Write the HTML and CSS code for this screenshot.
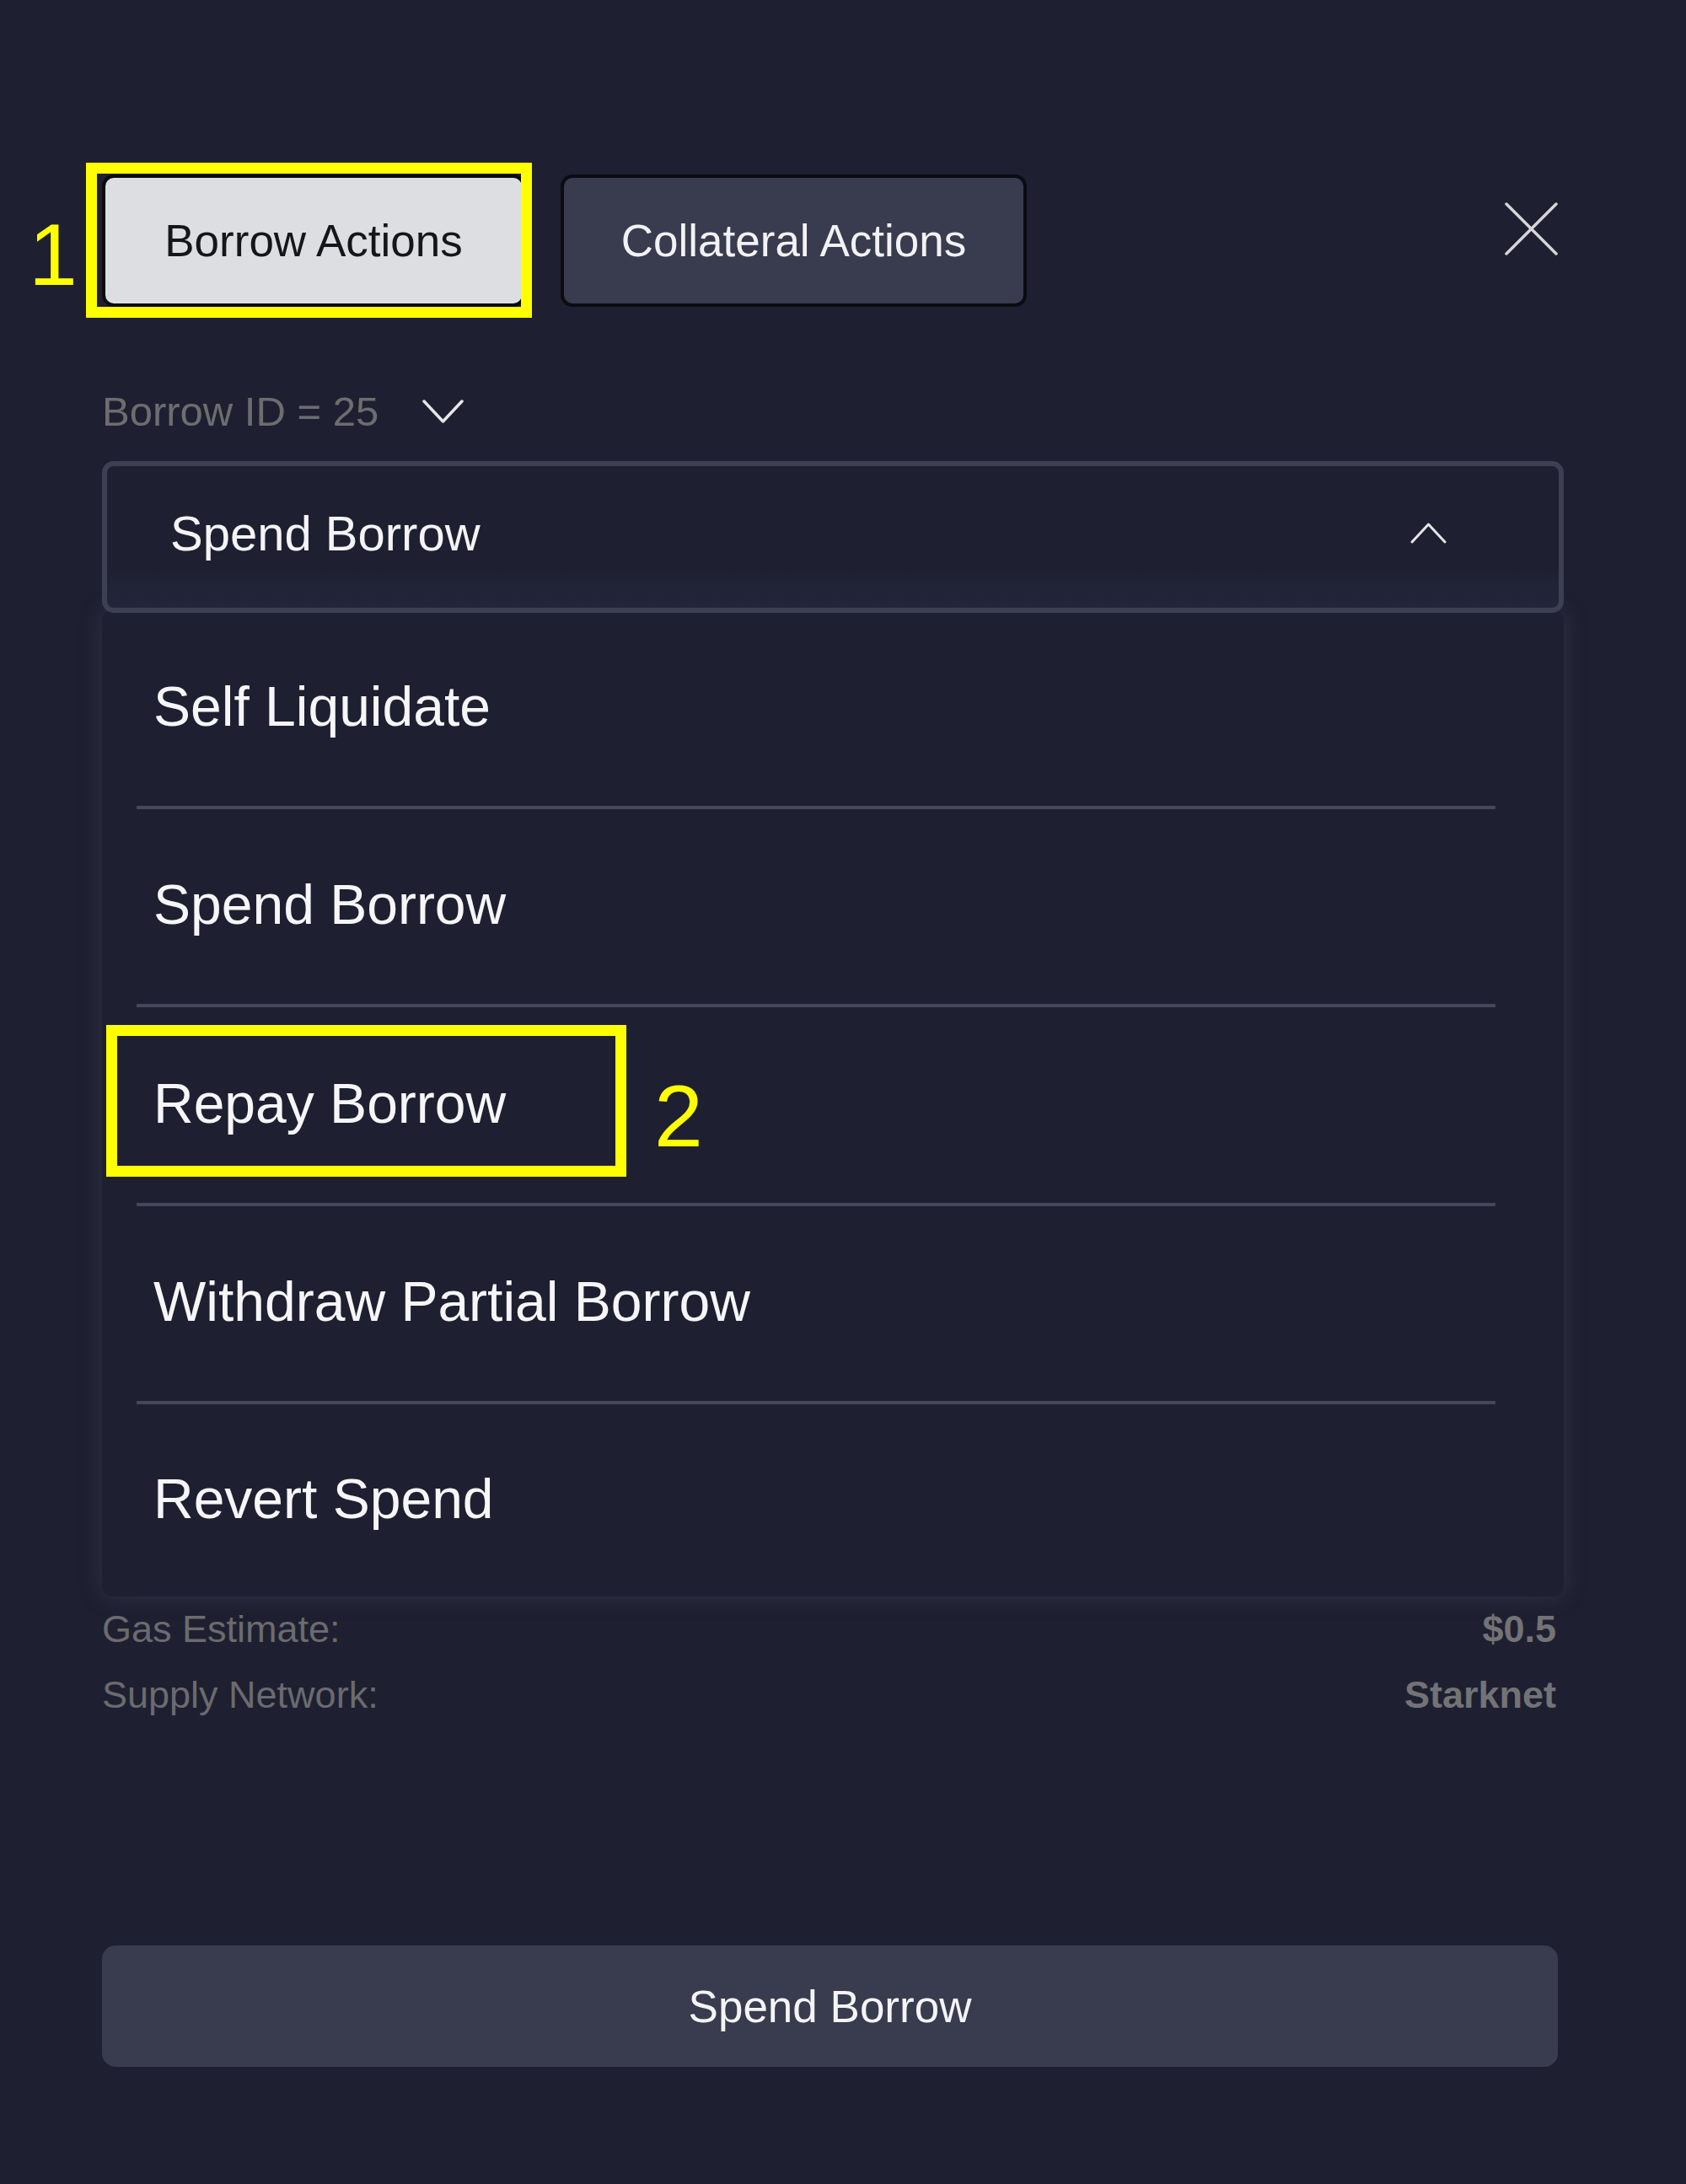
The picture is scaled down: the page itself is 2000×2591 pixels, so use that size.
FILE: index.html
```html
<!DOCTYPE html>
<html lang="en">
<head>
<meta charset="utf-8">
<title>Borrow Actions</title>
<link rel="stylesheet" href="styles.css">
</head>
<body>
<div class="modal">
  <div class="tabs">
    <button class="tab tab-active">Borrow Actions</button>
    <button class="tab tab-idle">Collateral Actions</button>
    <svg class="close" viewBox="0 0 63 63" width="63" height="63">
      <path d="M2 2 L61 61 M61 2 L2 61" stroke="#d6d6d8" stroke-width="3.5" stroke-linecap="round" fill="none"/>
    </svg>
  </div>

  <div class="borrow-id">
    <span>Borrow ID = 25</span>
    <svg class="chev-down" viewBox="0 0 49 30" width="49" height="30">
      <path d="M2 3 L24.5 27 L47 3" stroke="#e6e6e8" stroke-width="3.5" stroke-linecap="round" stroke-linejoin="round" fill="none"/>
    </svg>
  </div>

  <div class="select">
    <span>Spend Borrow</span>
    <svg class="chev-up" viewBox="0 0 43 27" width="43" height="27">
      <path d="M2 24 L21.5 3 L41 24" stroke="#e6e6e8" stroke-width="3" stroke-linecap="round" stroke-linejoin="round" fill="none"/>
    </svg>
  </div>

  <div class="menu">
    <div class="item">Self Liquidate</div>
    <div class="item">Spend Borrow</div>
    <div class="item">Repay Borrow</div>
    <div class="item">Withdraw Partial Borrow</div>
    <div class="item item-last">Revert Spend</div>
  </div>

  <div class="info">
    <div class="info-row"><span>Gas Estimate:</span><span class="val">$0.5</span></div>
    <div class="info-row"><span>Supply Network:</span><span class="val">Starknet</span></div>
  </div>

  <button class="submit">Spend Borrow</button>
</div>

<div class="mark mark-1"></div>
<div class="mark mark-2"></div>
<div class="num num-1">1</div>
<div class="num num-2">2</div>
</body>
</html>
```

FILE: styles.css
```css
html, body {
  margin: 0;
  padding: 0;
}
body {
  background: #1e2031;
  min-height: 2591px;
  font-family: "Liberation Sans", Arial, sans-serif;
  position: relative;
}
.modal {
  width: 1727px;
  padding: 207px 0 0 121px;
  display: flex;
  flex-direction: column;
}
.tabs {
  display: flex;
  align-items: flex-start;
  gap: 42px;
}
.tab {
  height: 157px;
  box-sizing: border-box;
  border: 4px solid #0b0c12;
  border-radius: 14px;
  font-family: "Liberation Sans", Arial, sans-serif;
  font-size: 53px;
  padding: 0;
  cursor: pointer;
}
.tab-active {
  width: 502px;
  background: #dcdee2;
  color: #15161c;
}
.tab-idle {
  width: 553px;
  background: #393b4e;
  color: #f2f2f4;
}
.close {
  margin-left: auto;
  margin-top: 33px;
  display: block;
}
.borrow-id {
  margin-top: 94px;
  display: flex;
  align-items: center;
  gap: 52px;
  font-size: 49px;
  line-height: 60px;
  color: #6d6d70;
}
.chev-down {
  display: block;
}
.select {
  position: relative;
  z-index: 1;
  margin-top: 29px;
  margin-right: -7px;
  height: 180px;
  box-sizing: border-box;
  border: 6px solid #3d4053;
  border-radius: 14px;
  display: flex;
  align-items: center;
  justify-content: space-between;
  padding: 0 133px 10px 75px;
  font-size: 58px;
  color: #f4f4f6;
  background: linear-gradient(#1e2031 70%, #23263a);
}
.chev-up {
  display: block;
}
.menu {
  margin-top: -3px;
  margin-right: -7px;
  background: #1e2031;
  border-radius: 12px;
  box-shadow: 0 0 26px rgba(70, 74, 100, 0.45);
}
.item {
  height: 235.5px;
  box-sizing: border-box;
  margin: 0 81px 0 41px;
  padding: 0 0 4px 20px;
  border-bottom: 4px solid #45475a;
  display: flex;
  align-items: center;
  font-size: 66px;
  line-height: 76px;
  color: #f6f6f8;
}
.item-last {
  height: 228px;
  border-bottom: none;
}
.info {
  display: flex;
  flex-direction: column;
  padding-right: 2px;
}
.info-row {
  height: 78px;
  display: flex;
  align-items: center;
  justify-content: space-between;
  font-size: 45px;
  color: #6b6b6e;
}
.val {
  font-weight: bold;
  color: #737376;
}
.submit {
  margin-top: 258px;
  height: 144px;
  border: none;
  border-radius: 16px;
  background: #393b4e;
  color: #f4f4f6;
  font-family: "Liberation Sans", Arial, sans-serif;
  font-size: 53px;
  padding: 0;
}
.mark {
  position: absolute;
  box-sizing: border-box;
  border: 13px solid #ffff00;
}
.mark-1 {
  left: 102px;
  top: 193px;
  width: 529px;
  height: 184px;
}
.mark-2 {
  left: 126px;
  top: 1216px;
  width: 617px;
  height: 180px;
}
.num {
  position: absolute;
  font-family: "Liberation Sans", Arial, sans-serif;
  font-size: 104px;
  line-height: 104px;
  color: #ffff00;
}
.num-1 {
  left: 34px;
  top: 250px;
}
.num-2 {
  left: 776px;
  top: 1272px;
}
```
